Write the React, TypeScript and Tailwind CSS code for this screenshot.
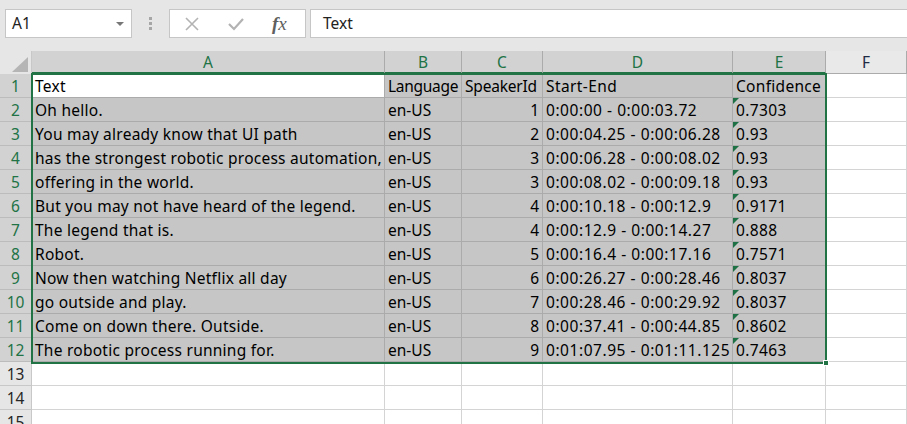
import React from 'react';

type Row = [string, string, number, string, string];

const rows: Row[] = [
  ['Oh hello.', 'en-US', 1, '0:00:00 - 0:00:03.72', '0.7303'],
  ['You may already know that UI path', 'en-US', 2, '0:00:04.25 - 0:00:06.28', '0.93'],
  ['has the strongest robotic process automation,', 'en-US', 3, '0:00:06.28 - 0:00:08.02', '0.93'],
  ['offering in the world.', 'en-US', 3, '0:00:08.02 - 0:00:09.18', '0.93'],
  ['But you may not have heard of the legend.', 'en-US', 4, '0:00:10.18 - 0:00:12.9', '0.9171'],
  ['The legend that is.', 'en-US', 4, '0:00:12.9 - 0:00:14.27', '0.888'],
  ['Robot.', 'en-US', 5, '0:00:16.4 - 0:00:17.16', '0.7571'],
  ['Now then watching Netflix all day', 'en-US', 6, '0:00:26.27 - 0:00:28.46', '0.8037'],
  ['go outside and play.', 'en-US', 7, '0:00:28.46 - 0:00:29.92', '0.8037'],
  ['Come on down there. Outside.', 'en-US', 8, '0:00:37.41 - 0:00:44.85', '0.8602'],
  ['The robotic process running for.', 'en-US', 9, '0:01:07.95 - 0:01:11.125', '0.7463'],
];

const cols = ['A', 'B', 'C', 'D', 'E'];

const font = { fontFamily: '"Noto Sans", "Liberation Sans", sans-serif' };

const Cell: React.FC<{
  children?: React.ReactNode;
  right?: boolean;
  sel?: boolean;
  white?: boolean;
  flag?: boolean;
  track?: string;
}> = ({ children, right, sel, white, flag, track = '' }) => (
  <div
    className={`relative h-[24px] flex items-center px-[3px] border-r border-b whitespace-nowrap overflow-hidden text-[15.5px] leading-none text-black ${track} ${
      right ? 'justify-end' : ''
    } ${sel ? (white ? 'bg-white border-[#ababab]' : 'bg-[#c6c6c6] border-[#ababab]') : 'bg-white border-[#d4d4d4]'}`}
  >
    {flag && (
      <span className="absolute left-0 top-0 w-0 h-0 border-t-[6px] border-r-[6px] border-t-[#1e7145] border-r-transparent" />
    )}
    <span className="pt-[3px]">{children}</span>
  </div>
);

const RowHead: React.FC<{ n: number; sel?: boolean }> = ({ n, sel }) => (
  <div
    className={`h-[24px] flex items-center justify-center border-r border-b text-[15.5px] leading-none pt-[3px] ${
      sel ? 'bg-[#d2d2d2] text-[#217346] border-[#bcbcbc]' : 'bg-[#e6e6e6] text-[#262626] border-[#c8c8c8]'
    }`}
  >
    {n}
  </div>
);

export default function App() {
  return (
    <div className="w-[907px] h-[424px] overflow-hidden bg-[#e6e6e6] relative" style={font}>
      {/* formula bar */}
      <div className="h-[51px] flex items-start pt-[9px]">
        <div className="ml-[5px] w-[127px] h-[29px] bg-white border border-[#c6c6c6] flex items-center justify-between pl-[6px] pr-[7px]">
          <span className="text-[15.5px] text-[#222] pt-[1px]">A1</span>
          <span className="w-0 h-0 border-l-[4px] border-r-[4px] border-t-[4px] border-l-transparent border-r-transparent border-t-[#777]" />
        </div>
        <div className="w-[37px] h-[29px] flex flex-col items-center justify-center gap-[2px]">
          <span className="w-[3px] h-[3px] bg-[#a6a6a6]" />
          <span className="w-[3px] h-[3px] bg-[#a6a6a6]" />
          <span className="w-[3px] h-[3px] bg-[#a6a6a6]" />
        </div>
        <div className="w-[137px] h-[29px] bg-white border border-[#c6c6c6] flex items-center">
          <svg width="14" height="14" viewBox="0 0 14 14" className="ml-[15px]">
            <path d="M1 1 L13 13 M13 1 L1 13" stroke="#b3b3b3" strokeWidth="1.6" fill="none" />
          </svg>
          <svg width="16" height="14" viewBox="0 0 16 14" className="ml-[29px]">
            <path d="M1 7 L6 12 L15 2" stroke="#b3b3b3" strokeWidth="2.2" fill="none" />
          </svg>
          <span
            className="ml-[28px] text-[19px] italic text-[#5f5f5f] leading-none"
            style={{ fontFamily: '"Liberation Serif", "Times New Roman", serif' }}
          >
            <span className="font-bold">f</span>x
          </span>
        </div>
        <div className="ml-[4px] flex-1 h-[29px] bg-white border border-[#c6c6c6] border-r-0 flex items-center pl-[12px]">
          <span className="text-[15.5px] text-[#222] pt-[1px]">Text</span>
        </div>
      </div>

      {/* grid */}
      <div className="grid grid-cols-[32px_353px_77px_81px_190px_93px_81px]">
        <div className="h-[23px] bg-[#e6e6e6] border-r border-[#c8c8c8] relative">
          <svg width="16" height="15" viewBox="0 0 16 15" className="absolute right-[3px] bottom-[2px]">
            <path d="M16 0 L16 15 L0 15 Z" fill="#b5b5b5" />
          </svg>
        </div>
        {cols.map((c) => (
          <div
            key={c}
            className="h-[23px] bg-[#d2d2d2] border-r border-[#ababab] border-b-2 border-b-[#217346] flex items-center justify-center text-[15.5px] leading-none pt-[2px] text-[#217346]"
          >
            {c}
          </div>
        ))}
        <div className="h-[23px] bg-[#e9e9e9] border-r border-b border-[#ababab] flex items-center justify-center text-[15.5px] leading-none pt-[2px] text-[#1f2a44]">
          F
        </div>

        <RowHead n={1} sel />
        <Cell sel white track="tracking-[0.25px]">Text</Cell>
        <Cell sel track="tracking-[-0.3px]">Language</Cell>
        <Cell sel track="tracking-[-0.2px]">SpeakerId</Cell>
        <Cell sel track="tracking-[0.4px]">Start-End</Cell>
        <Cell sel track="tracking-[0.3px]">Confidence</Cell>
        <Cell />

        {rows.map((r, i) => (
          <React.Fragment key={i}>
            <RowHead n={i + 2} sel />
            <Cell sel track="tracking-[0.25px]">{r[0]}</Cell>
            <Cell sel>{r[1]}</Cell>
            <Cell sel right>
              {r[2]}
            </Cell>
            <Cell sel track="tracking-[0.55px]">{r[3]}</Cell>
            <Cell sel flag track="tracking-[0.4px]">
              {r[4]}
            </Cell>
            <Cell />
          </React.Fragment>
        ))}

        {[13, 14, 15].map((n) => (
          <React.Fragment key={n}>
            <RowHead n={n} />
            <Cell />
            <Cell />
            <Cell />
            <Cell />
            <Cell />
            <Cell />
          </React.Fragment>
        ))}
      </div>

      {/* selection outline */}
      <div className="absolute left-[31px] top-[73px] w-[796px] h-[291px] border-2 border-[#217346] pointer-events-none" />
      <div className="absolute left-[823px] top-[360px] w-[6px] h-[6px] bg-[#217346] border border-white" />
    </div>
  );
}
